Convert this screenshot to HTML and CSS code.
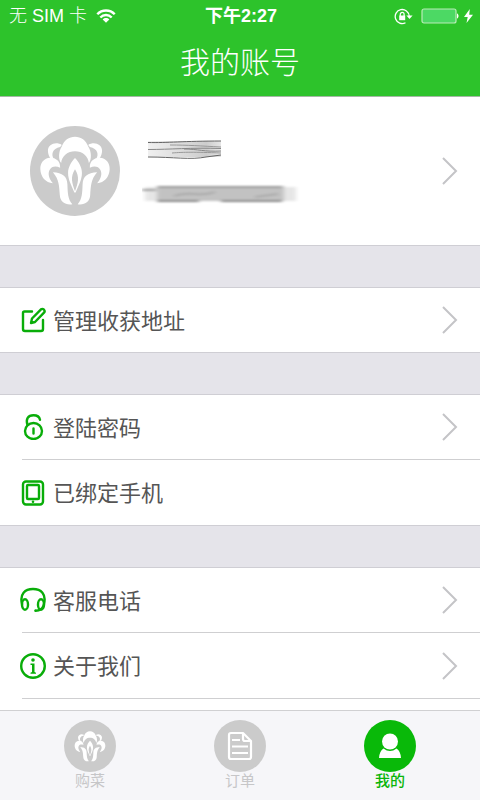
FILE: index.html
```html
<!DOCTYPE html>
<html lang="zh-CN">
<head>
<meta charset="utf-8">
<meta name="viewport" content="width=device-width, initial-scale=1">
<title>我的账号</title>
<link rel="stylesheet" href="styles.css">
</head>
<body>
<svg class="defs" aria-hidden="true">
  <symbol id="flower" viewBox="10 12 216 212">
    <path d="M76 94C67 84 68 58 78 44C84 25 100 14 118 14s34 11 40 30c10 14 11 40 2 50-2-22-20-36-42-36S78 72 76 94z"/>
    <g id="side">
      <path d="M78 39C60 28 36 37 36 57c0 9 3 16 7 22l11 2C45 68 49 50 73 45z"/>
      <path d="M73 108C74 88 60 78 43 78 24 79 12 94 13 113c1 23 16 41 38 42-12-14-16-29-10-40 6-11 18-13 32-7z"/>
      <path d="M51 122c29 1 43 13 44 36 1 25 1 45 15 61-21 3-37-7-38-28-2-27-2-47-21-69z"/>
    </g>
    <use href="#side" transform="translate(236 0) scale(-1 1)"/>
    <path fill-rule="evenodd" d="M118 79c-12 12-21 29-21 45 0 20 10 37 19 59h4c9-22 19-39 19-59 0-16-9-33-21-45zm0 34c-7 11-10 23-9 33 1 12 5 22 9 33 4-11 8-21 9-33 1-10-2-22-9-33z"/>
  </symbol>
  <symbol id="chevron" viewBox="0 0 16 28">
    <path d="M1 1l13 13L1 27" fill="none" stroke="#c4c4c7" stroke-width="2"/>
  </symbol>
</svg>

<div class="app">
  <header class="header">
    <div class="status">
      <div class="status-left">
        <span>无 SIM 卡</span>
        <svg width="20" height="14" viewBox="0 0 20 14" aria-hidden="true">
          <g fill="none" stroke="#fff" stroke-width="2.4">
            <path d="M1.3 5.3C6 .2 14 .2 18.700 5.300"/>
            <path d="M4.300 8.500c3.200-3.300 8.200-3.300 11.400 0"/>
          </g>
          <path d="M6.700 10.500c1.900-1.900 4.700-1.900 6.600 0L10 13.800z" fill="#fff"/>
        </svg>
      </div>
      <time class="clock">下午2:27</time>
      <div class="status-right">
        <svg width="19" height="17" viewBox="0 0 19 17" aria-hidden="true">
          <path d="M11.500 14.700A7 7 0 1 1 15.200 8" fill="none" stroke="#fff" stroke-width="1.300"/>
          <path d="M12.400 7.500h6.200l-3.100 3.400z" fill="#fff"/>
          <path d="M5.200 7.500h6v4.700h-6z" fill="#fff"/>
          <path d="M6.300 8V6.300a1.900 1.900 0 0 1 3.800 0V8" fill="none" stroke="#fff" stroke-width="1.200"/>
        </svg>
        <svg width="38" height="16" viewBox="0 0 38 16" aria-hidden="true">
          <rect x="1" y="1" width="34" height="14" rx="2" fill="#4cd964" stroke="#b9ecb7" stroke-width="1.200"/>
          <path d="M36 5.500c2 .5 2 4.500 0 5z" fill="#fff"/>
        </svg>
        <svg width="9" height="14" viewBox="0 0 9 14" aria-hidden="true">
          <path d="M5.800 0L0 8h3.700L2.500 14 9 5.800H5.200z" fill="#fff"/>
        </svg>
      </div>
    </div>
    <h1>我的账号</h1>
  </header>

  <main class="content">
    <a class="profile" href="#" aria-label="个人资料">
      <span class="avatar"><svg><use href="#flower"/></svg></span>
      <svg class="smudge" viewBox="0 0 160 68" aria-hidden="true">
        <defs>
          <filter id="soft" x="-10%" y="-40%" width="120%" height="180%"><feGaussianBlur stdDeviation="0.5"/></filter>
          <filter id="smear" x="-10%" y="-40%" width="120%" height="180%"><feGaussianBlur stdDeviation="2.200 0.800"/></filter>
          <linearGradient id="band"><stop stop-color="#f0f0f0"/><stop offset=".45" stop-color="#dcdcdc"/><stop offset=".8" stop-color="#cdcdcd"/><stop offset="1" stop-color="#e6e6e6"/></linearGradient>
        </defs>
        <rect x="6" y="4" width="73" height="16" fill="url(#band)"/>
        <g fill="none" stroke="#666" filter="url(#soft)">
          <path d="M6 5.500C25 6 42 4 79 4"/>
          <path d="M28 8c18 0 31 1 51 2" stroke="#999"/>
          <path d="M6 12.500c22 0 43-2 73-1M42 12c14 0 20 3 37 2" stroke="#888"/>
          <path d="M30 16c12-1 22-1 49 0" stroke="#999"/>
          <path d="M6 20c25 0 43 3 58 0l15-2"/>
        </g>
        <g filter="url(#smear)">
          <rect x="3" y="50" width="151" height="14" fill="#e6e6e6"/>
          <rect x="15" y="49" width="127" height="15" fill="#c2c2c2"/>
          <g fill="none" stroke="#888" stroke-width="2">
            <path d="M0 53h14M15 50h125" stroke="#999"/>
            <path d="M15 64h42m22 0h61"/>
            <path d="M32 59c18-6 24 2 41-4M113 60l23-3" stroke="#aaa"/>
          </g>
        </g>
      </svg>
      <svg class="chevron"><use href="#chevron"/></svg>
    </a>

    <ul class="group">
      <li><a class="row" href="#">
        <svg class="icon" viewBox="0 0 26 26" aria-hidden="true"><path d="M12 4.500H4.500Q3 4.500 3 6V22q0 2 2 2h16q2 0 2-2V13"/><path d="M11 16l1-4.500L21 2.300q1.500-1 3 .4 1.300 1.500 0 3L15 15z"/></svg>
        <span>管理收获地址</span><svg class="chevron"><use href="#chevron"/></svg>
      </a></li>
    </ul>

    <ul class="group">
      <li><a class="row" href="#">
        <svg class="icon" viewBox="0 0 26 26" aria-hidden="true"><ellipse cx="13.500" cy="17" rx="8.500" ry="8"/><path d="M7.500 11C5.500 5 8 1.200 13.500 1.200c4 0 6 2 6.500 4.500M13.500 14.500v5"/></svg>
        <span>登陆密码</span><svg class="chevron"><use href="#chevron"/></svg>
      </a></li>
      <li><a class="row" href="#">
        <svg class="icon" viewBox="0 0 26 26" aria-hidden="true"><rect x="3" y="1.500" width="20" height="23" rx="3"/><rect x="7" y="5" width="12" height="14" rx="1"/><circle cx="13" cy="21.700" r="1.300" class="solid"/></svg>
        <span>已绑定手机</span>
      </a></li>
    </ul>

    <ul class="group">
      <li><a class="row" href="#">
        <svg class="icon" viewBox="0 0 26 26" aria-hidden="true"><path d="M2 17C-.5 7 5 2 13 2s13.500 5 11 15c-1 5-4 6.700-8.500 6.700"/><ellipse cx="5" cy="17.500" rx="3" ry="5.300"/><ellipse cx="21" cy="17.500" rx="3" ry="5.300"/><circle cx="15.500" cy="23.600" r="1" class="solid"/></svg>
        <span>客服电话</span><svg class="chevron"><use href="#chevron"/></svg>
      </a></li>
      <li><a class="row" href="#">
        <svg class="icon" viewBox="0 0 26 26" aria-hidden="true"><circle cx="13" cy="13" r="11.800"/><circle cx="13" cy="7" r="1.800" class="solid"/><path class="solid" d="M10.500 10.500h4v8.500l1.500.7v1h-5.500v-1l1.500-.7v-7h-1.500z"/></svg>
        <span>关于我们</span><svg class="chevron"><use href="#chevron"/></svg>
      </a></li>
      <li class="next"></li>
    </ul>
  </main>

  <nav class="tabs">
    <a class="tab" href="#"><span class="disc"><svg class="tab-flower"><use href="#flower"/></svg></span>购菜</a>
    <a class="tab" href="#"><span class="disc">
      <svg width="26" height="30" viewBox="0 0 26 30" fill="none" stroke="#fff" stroke-width="2.200" stroke-linejoin="round" aria-hidden="true"><path d="M4 2h12l8 8v16q0 2-2 2H4q-2 0-2-2V4q0-2 2-2z"/><path d="M16 2v6q0 2 2 2h6M5 9h8M5 15.500h16M5 22h16"/></svg>
    </span>订单</a>
    <a class="tab active" href="#" aria-current="page"><span class="disc">
      <svg width="24" height="26" viewBox="0 0 24 26" fill="#fff" aria-hidden="true"><circle cx="12" cy="8.500" r="8"/><path d="M5.500 15.500q6.500 5 13 0 4 2.500 4.500 9.500H1q.5-7 4.500-9.500z"/></svg>
    </span>我的</a>
  </nav>
</div>
</body>
</html>
```
FILE: styles.css
```css
* { box-sizing: border-box; }

body {
  margin: 0;
  font-family: "Liberation Sans", "Noto Sans CJK SC", sans-serif;
  color: #555;
  background: #fff;
}

a { color: inherit; text-decoration: none; }
ul { list-style: none; margin: 0; padding: 0; }
.defs { position: absolute; width: 0; height: 0; }

.app {
  display: flex;
  flex-direction: column;
  height: 100vh;
}

.header {
  flex: none;
  background: #2dc32b;
  border-bottom: 1px solid #a5b8a5;
  color: #fff;
}

.status {
  display: grid;
  grid-template-columns: 1fr auto 1fr;
  align-items: center;
  height: 32px;
  padding: 0 7px 0 9px;
  font-size: 18px;
  line-height: 32px;
  font-weight: 300;
}

.status-left,
.status-right { display: flex; align-items: center; gap: 9px; height: 30px; }
.status-right { justify-content: flex-end; gap: 5px; }
.status-right svg:first-child { margin-right: 3px; }
.clock { font-weight: 700; line-height: 30px; }

h1 {
  margin: 0;
  height: 64px;
  font-size: 30px;
  line-height: 62px;
  font-weight: 300;
  text-align: center;
}

.content {
  flex: 1;
  min-height: 0;
  overflow-y: auto;
  scrollbar-width: none;
  background: #e5e4ea;
}

.profile {
  display: flex;
  align-items: center;
  height: 149px;
  padding: 0 22px 0 30px;
  background: #fff;
  border-bottom: 1px solid #cfced4;
}

.avatar {
  display: grid;
  place-items: center;
  width: 90px;
  height: 90px;
  border-radius: 50%;
  background: #cbcbcb;
}

.avatar svg { width: 72px; height: 70px; fill: #fff; }
.smudge { width: 160px; height: 68px; margin-left: 22px; }
.chevron { width: 16px; height: 28px; margin-left: auto; flex: none; }

.group {
  margin-top: 41px;
  background: #fff;
  border-top: 1px solid #cfced4;
  border-bottom: 1px solid #cfced4;
}

.group li + li { margin-left: 22px; border-top: 1px solid #cfcfd1; }

.row {
  display: flex;
  align-items: center;
  gap: 7px;
  height: 64px;
  padding: 0 22px 0 20px;
  font-size: 22px;
  line-height: 32px;
}

.row span { padding-top: 3px; }

.group li + li .row { height: 65px; padding-left: 0; margin-left: -2px; }
.next { height: 65px; }

.icon {
  flex: none;
  width: 26px;
  height: 26px;
  fill: none;
  stroke: #09ad09;
  stroke-width: 2.400;
  stroke-linecap: round;
  stroke-linejoin: round;
}

.icon .solid { fill: #09ad09; stroke: none; }

.tabs {
  flex: none;
  display: grid;
  grid-template-columns: repeat(3, 1fr);
  height: 90px;
  padding: 9px 15px 0;
  background: #f6f6f9;
  border-top: 1px solid #d0d0d2;
}

.tab {
  display: flex;
  flex-direction: column;
  align-items: center;
  font-size: 15px;
  line-height: 18px;
  color: #c6c6c8;
}

.disc {
  display: grid;
  place-items: center;
  width: 52px;
  height: 52px;
  border-radius: 50%;
  background: #cbcbcb;
}

.tab-flower { width: 32px; height: 31px; fill: #fff; }
.active { color: #09b509; font-weight: 500; }
.active .disc { background: #09b909; }
```
